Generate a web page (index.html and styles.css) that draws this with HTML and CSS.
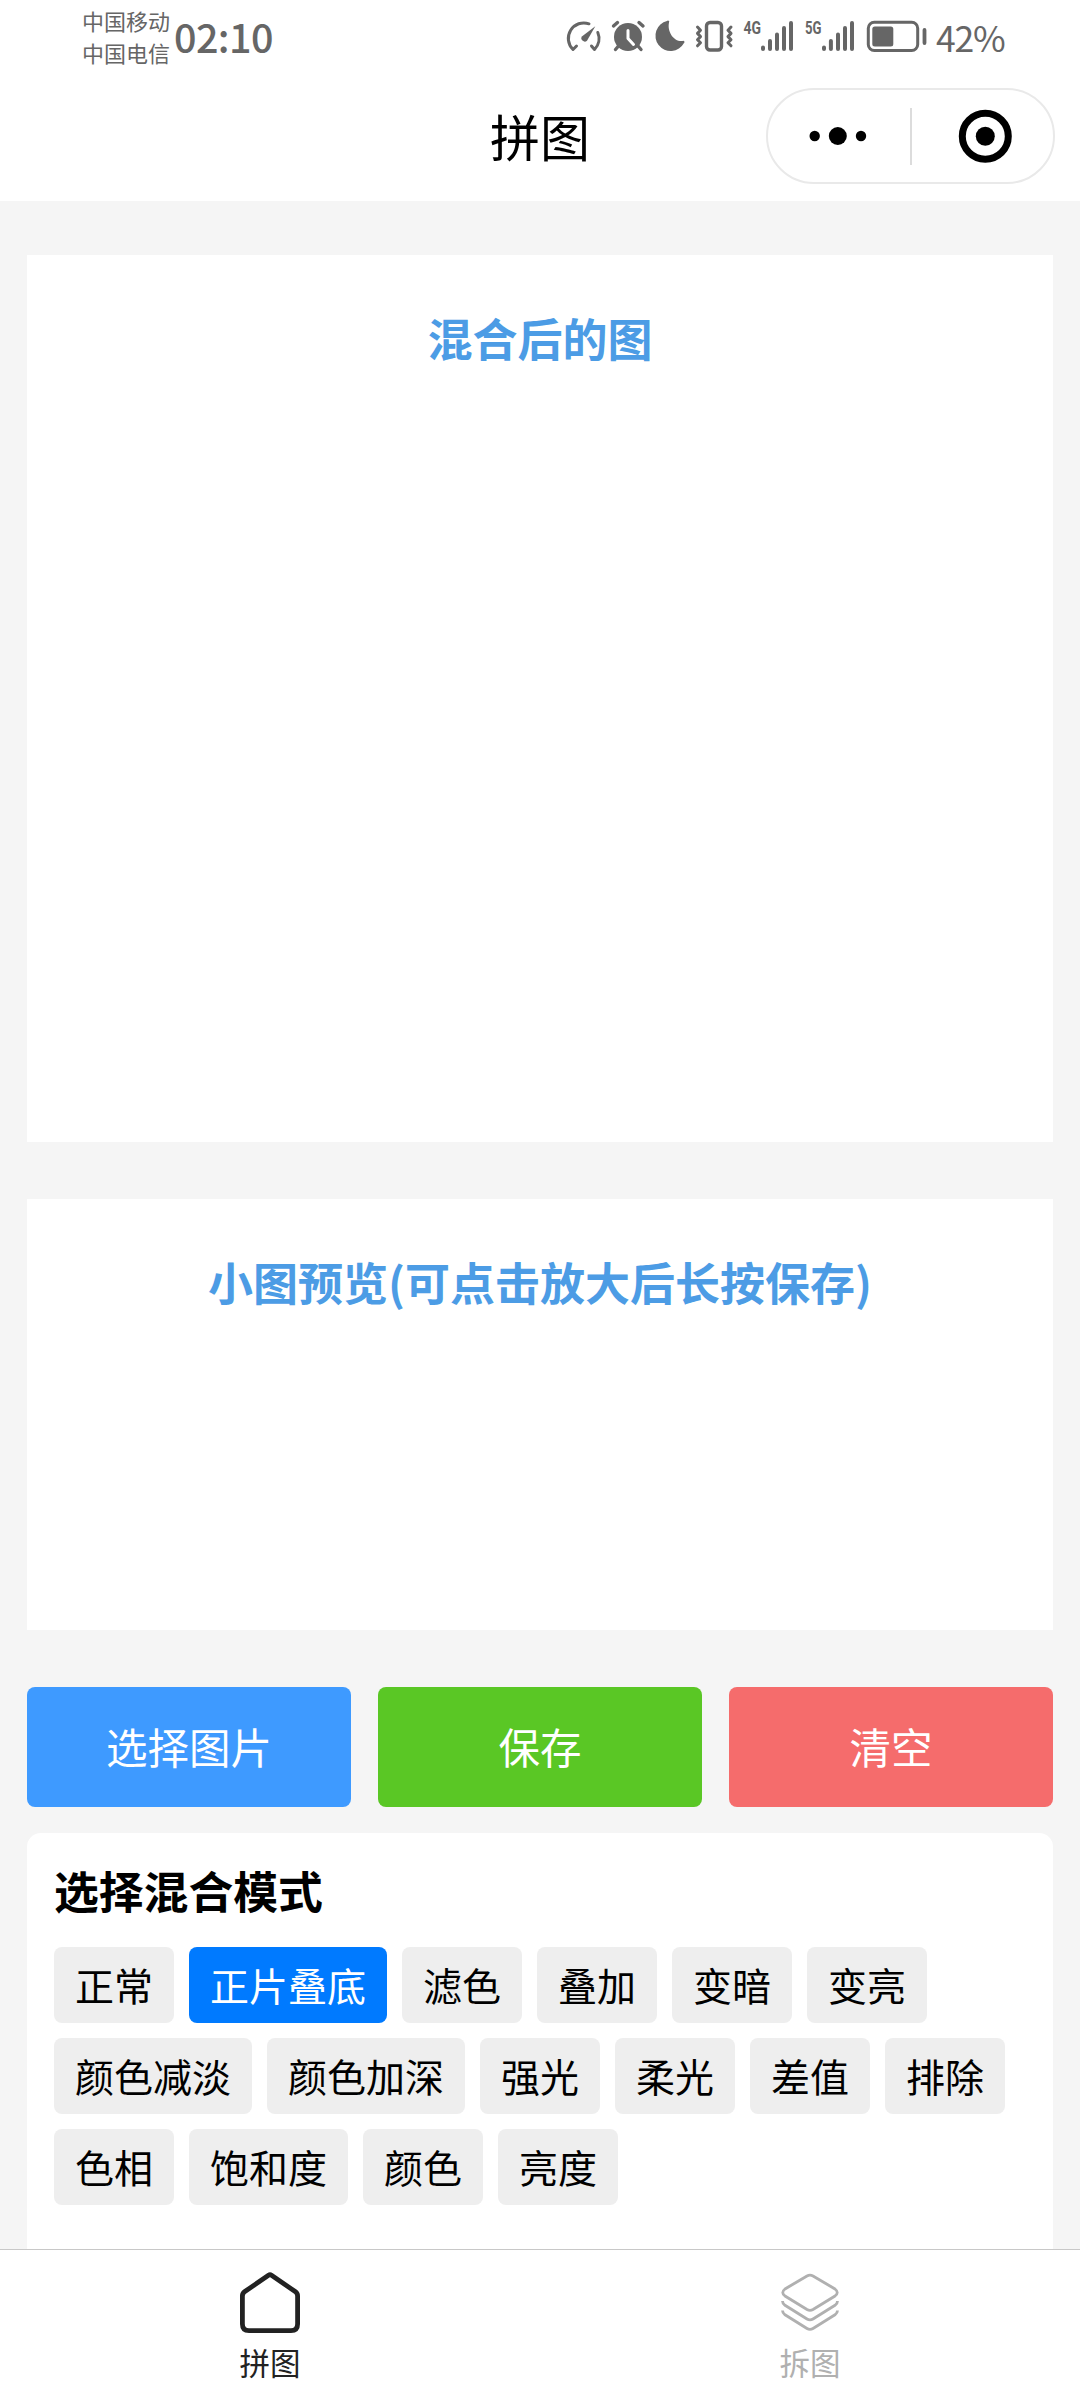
FILE: index.html
```html
<!DOCTYPE html>
<html lang="zh-CN">
<head>
<meta charset="utf-8">
<title>拼图</title>
<link rel="stylesheet" href="styles.css">
</head>
<body>
<header class="header">
  <div class="status">
    <div class="carriers"><span>中国移动</span><span>中国电信</span></div>
    <span class="time">02:10</span>
    <svg class="status-icons" width="385" height="76" viewBox="550 0 385 76">
      <g fill="none" stroke="#666" stroke-width="3.4" stroke-linecap="round" stroke-linejoin="round">
        <path stroke-width="3" d="M576.500 46l-3.500 3.500A15.500 15.500 0 0 1 589 23.800M597.800 32.500A15.500 15.500 0 0 1 594.500 49.500l-3-3.500"/>
        <path d="M613.500 26l4-3.500M639 22.500l4 3.500M618.500 46l-3 3.500M638 46l3 3.500"/>
        <rect x="706.500" y="22.500" width="15" height="27.500" rx="3.500"/>
        <path stroke-width="3" d="M697.500 27l3 3.200-3 3.200 3 3.200-3 3.200 3 3-3 3M731 27l-3 3.200 3 3.200-3 3.200 3 3.200-3 3 3 3"/>
        <path stroke-width="4" d="M763 47.500v1.500M770 41v8M777 34.500V49M784 28v21M791 23v26M824 47.500v1.500M830.900 41v8M838 34.500V49M845 28v21M852 23v26"/>
        <rect stroke-width="3" x="868.300" y="22.300" width="49.400" height="28.200" rx="6"/>
        <path stroke-width="3.800" d="M924.500 30v13"/>
      </g>
      <g fill="#666">
        <path d="M595.300 26.200l-8.300 14.500a3.500 3.500 0 0 1-5.500-4z"/>
        <circle cx="628" cy="37" r="14"/>
        <path d="M667 21A1.200 1.200 0 0 1 669 22.500C667 32 674 42 682.500 41A1.200 1.200 0 0 1 684 43A15.200 15.200 0 1 1 667 21z"/>
        <rect x="872.300" y="26.500" width="21" height="20" rx="2.500"/>
        <text class="net" x="743.500" y="34" textLength="17.500" lengthAdjust="spacingAndGlyphs">4G</text>
        <text class="net" x="805" y="34" textLength="16.500" lengthAdjust="spacingAndGlyphs">5G</text>
      </g>
      <path d="M628 30.500v8l5.500 6" fill="none" stroke="#fff" stroke-width="3" stroke-linecap="round" stroke-linejoin="round"/>
    </svg>
    <span class="percent">42%</span>
  </div>
  <div class="nav">
    <h1 class="nav-title">拼图</h1>
    <div class="capsule">
      <svg width="285" height="92" viewBox="768 90 285 92">
        <circle cx="814.700" cy="136" r="5.200"/><circle cx="837.800" cy="136" r="9"/><circle cx="861" cy="136" r="5.200"/>
        <path d="M911 108v57" stroke="#dcdcdc" stroke-width="2"/>
        <circle cx="985.300" cy="136.300" r="23" fill="none" stroke="#000" stroke-width="7"/>
        <circle cx="985.300" cy="136.300" r="9.500"/>
      </svg>
    </div>
  </div>
</header>
<main class="content">
  <section class="panel result"><h2 class="panel-title">混合后的图</h2></section>
  <section class="panel preview"><h2 class="panel-title">小图预览(可点击放大后长按保存)</h2></section>
  <div class="actions">
    <button class="btn choose">选择图片</button>
    <button class="btn save">保存</button>
    <button class="btn clear">清空</button>
  </div>
  <section class="modes">
    <h2 class="modes-title">选择混合模式</h2>
    <div class="chips">
      <span class="chip">正常</span><span class="chip active">正片叠底</span><span class="chip">滤色</span><span class="chip">叠加</span><span class="chip">变暗</span><span class="chip">变亮</span><span class="chip">颜色减淡</span><span class="chip">颜色加深</span><span class="chip">强光</span><span class="chip">柔光</span><span class="chip">差值</span><span class="chip">排除</span><span class="chip">色相</span><span class="chip">饱和度</span><span class="chip">颜色</span><span class="chip">亮度</span>
    </div>
  </section>
</main>
<nav class="tabbar">
  <div class="tab current">
    <svg width="64" height="64" viewBox="0 0 64 64" fill="none" stroke="currentColor" stroke-width="4.800" stroke-linejoin="round">
      <path d="M30.500 4.200Q32 3.200 33.500 4.200L57.500 20.800Q59.600 22.300 59.600 25V53Q59.600 59.600 53 59.600H11Q4.400 59.600 4.400 53V25Q4.400 22.300 6.500 20.800Z"/>
    </svg>
    <span>拼图</span>
  </div>
  <div class="tab">
    <svg width="64" height="64" viewBox="0 0 64 64" fill="none" stroke="currentColor" stroke-width="2.800">
      <path d="M29 5Q32 3.300 35 5L57 18Q61.500 21.500 57 25L35 38.500Q32 40.200 29 38.500L7 25Q2.500 21.500 7 18Z"/>
      <path d="M4.500 30Q4.500 32.500 7 34.300L29 48Q32 49.800 35 48L57 34.300Q59.500 32.500 59.500 30M4.500 39.500Q4.500 42 7 43.800L29 57.500Q32 59.300 35 57.500L57 43.800Q59.500 42 59.500 39.500"/>
    </svg>
    <span>拆图</span>
  </div>
</nav>
</body>
</html>
```
FILE: styles.css
```css
* { box-sizing: border-box; }

body {
  margin: 0;
  height: 2400px;
  display: flex;
  flex-direction: column;
  overflow: hidden;
  background: #f5f5f5;
  color: #000;
  font-family: "Noto Sans CJK SC", "Noto Sans", sans-serif;
}

h1, h2 { margin: 0; }
svg { display: block; flex: none; }

.header { height: 201px; flex: none; background: #fff; }

.status {
  display: flex;
  align-items: center;
  height: 76px;
  padding-left: 82px;
  color: #666;
}
.carriers { display: flex; flex-direction: column; width: 92px; padding-bottom: 5px; font-size: 22px; line-height: 32px; }
.time { width: 376px; padding-bottom: 4px; font-size: 39.5px; font-weight: 500; letter-spacing: -0.6px; line-height: 72px; }
.percent { margin-left: 1px; padding-bottom: 3px; font-size: 35.5px; line-height: 73px; letter-spacing: -1.2px; }
.net { font-family: Roboto, sans-serif; font-size: 18px; font-weight: 700; }

.nav {
  display: grid;
  grid-template-columns: 1fr auto 1fr;
  align-items: center;
  height: 96px;
  margin-top: 12px;
  padding-right: 25px;
  padding-left: 25px;
}
.nav-title { grid-column: 2; font-size: 50px; font-weight: 400; line-height: 94px; padding-bottom: 2px; }
.capsule { justify-self: end; width: 289px; height: 96px; border: 2px solid #e9e9e9; border-radius: 48px; }

.content { flex: 1; min-height: 0; padding: 54px 27px 0; overflow: hidden; }

.panel { padding-top: 50px; background: #fff; text-align: center; }
.result { height: 887px; }
.preview { height: 431px; margin-top: 57px; }
.panel-title { color: #4c9ce5; font-size: 45px; font-weight: 700; line-height: 66px; }

.actions { display: grid; grid-template-columns: repeat(3, 1fr); gap: 27px; margin-top: 57px; }
.btn {
  height: 120px;
  padding: 0 0 2px;
  border: 0;
  border-radius: 8px;
  color: #fff;
  font-family: inherit;
  font-size: 41.5px;
}
.choose { background: #3e9aff; }
.save { background: #5ac725; }
.clear { background: #f56c6c; }

.modes { height: 440px; margin-top: 26px; padding: 24px 27px; border-radius: 14px; background: #fff; }
.modes-title { font-size: 44.8px; font-weight: 700; line-height: 66px; }
.chips { display: flex; flex-wrap: wrap; gap: 15px; margin-top: 24px; }
.chip { height: 76px; padding: 0 21px; border-radius: 8px; background: #eee; font-size: 39px; line-height: 74px; }
.chip.active { background: #007aff; color: #fff; }

.tabbar { display: flex; flex: none; height: 151px; border-top: 1px solid #c8c8c8; background: #fff; }
.tab { display: flex; flex: 1; flex-direction: column; align-items: center; padding-top: 21px; color: #b0b0b0; font-size: 30.5px; line-height: 46px; }
.tab span { margin-top: 4px; }
.current { color: #222; }
```
